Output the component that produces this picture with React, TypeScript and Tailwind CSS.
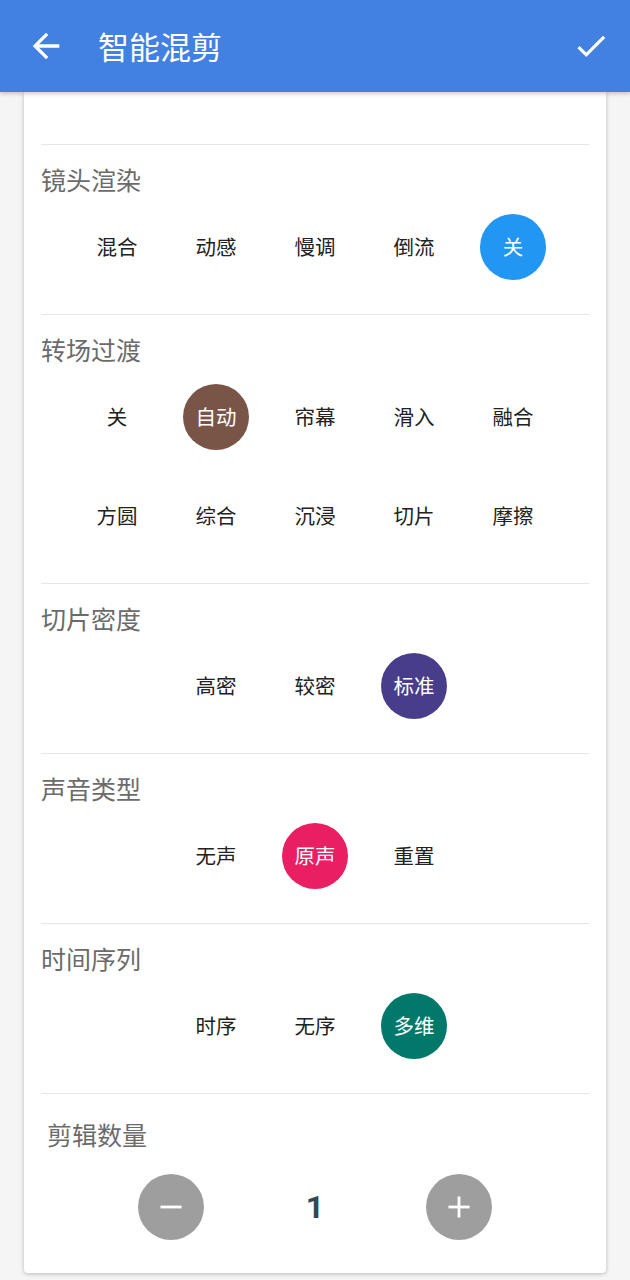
import React, { useState } from 'react';

type Section = {
  title: string;
  options: string[];
  offset: number;
  color: string;
};

const sections: Section[] = [
  { title: '镜头渲染', options: ['混合', '动感', '慢调', '倒流', '关'], offset: 0, color: 'bg-[#2196f3]' },
  {
    title: '转场过渡',
    options: ['关', '自动', '帘幕', '滑入', '融合', '方圆', '综合', '沉浸', '切片', '摩擦'],
    offset: 0,
    color: 'bg-[#795548]',
  },
  { title: '切片密度', options: ['高密', '较密', '标准'], offset: 1, color: 'bg-[#483d8b]' },
  { title: '声音类型', options: ['无声', '原声', '重置'], offset: 1, color: 'bg-[#e91e63]' },
  { title: '时间序列', options: ['时序', '无序', '多维'], offset: 1, color: 'bg-[#00796b]' },
];

const initial = [4, 1, 2, 1, 2];

function OptionSection({ section, selected, onSelect }: { section: Section; selected: number; onSelect: (i: number) => void }) {
  return (
    <div className="border-t border-[#e6e6e6]">
      <div className="pt-[22px] text-[25px] leading-[24px] text-[#6b6b6b]">{section.title}</div>
      <div className="mx-auto mt-[6px] grid w-[495px] grid-cols-5 pb-[18px]">
        {section.offset > 0 && <div />}
        {section.options.map((opt, i) => (
          <div key={opt + i} className="flex h-[99px] items-center justify-center">
            <button
              onClick={() => onSelect(i)}
              className={`flex h-[66px] w-[66px] items-center justify-center rounded-full text-[20.5px] ${
                i === selected ? `${section.color} text-white` : 'text-[#222]'
              }`}
            >
              {opt}
            </button>
          </div>
        ))}
      </div>
    </div>
  );
}

export default function App() {
  const [selected, setSelected] = useState(initial);
  const [count, setCount] = useState(1);

  return (
    <div
      className="flex h-[1280px] w-[630px] flex-col overflow-hidden bg-[#f5f5f5]"
      style={{ fontFamily: '"Noto Sans CJK SC", Roboto, sans-serif' }}
    >
      {/* Header */}
      <div className="z-10 flex h-[92px] shrink-0 items-center bg-[#4281e1] pl-[26px] pr-[20px] shadow-[0_2px_4px_rgba(0,0,0,0.2)]">
        <svg width="40" height="40" viewBox="0 0 24 24" fill="white">
          <path d="M20 11H7.83l5.59-5.59L12 4l-8 8 8 8 1.41-1.41L7.83 13H20v-2z" />
        </svg>
        <div className="ml-[32px] flex-1 text-[31px] text-white">智能混剪</div>
        <svg width="38" height="38" viewBox="0 0 24 24" fill="white">
          <path d="M9 16.17L4.83 12l-1.42 1.41L9 19 21 7l-1.41-1.41z" />
        </svg>
      </div>

      {/* Card */}
      <div className="mx-[24px] flex-1">
        <div className="rounded-b-[4px] bg-white px-[17px] shadow-[0_1px_4px_rgba(0,0,0,0.25)]">
          <div className="h-[52px]" />
          {sections.map((s, idx) => (
            <OptionSection
              key={s.title}
              section={s}
              selected={selected[idx]}
              onSelect={(i) => setSelected(selected.map((v, j) => (j === idx ? i : v)))}
            />
          ))}

          {/* Count */}
          <div className="border-t border-[#e6e6e6]">
            <div className="pl-[6px] pt-[28px] text-[25px] leading-[24px] text-[#6b6b6b]">剪辑数量</div>
            <div className="mx-auto mt-[28px] grid h-[66px] w-[432px] grid-cols-3 items-center">
              <div className="flex justify-center">
                <button
                  onClick={() => setCount(Math.max(1, count - 1))}
                  className="flex h-[66px] w-[66px] items-center justify-center rounded-full bg-[#9e9e9e]"
                >
                  <svg width="28" height="28" viewBox="0 0 24 24" fill="white">
                    <rect x="3" y="10.8" width="18" height="2.4" />
                  </svg>
                </button>
              </div>
              <div className="text-center text-[32px] font-bold text-[#37474f]" style={{ fontFamily: 'Roboto, sans-serif' }}>
                {count}
              </div>
              <div className="flex justify-center">
                <button
                  onClick={() => setCount(count + 1)}
                  className="flex h-[66px] w-[66px] items-center justify-center rounded-full bg-[#9e9e9e]"
                >
                  <svg width="28" height="28" viewBox="0 0 24 24" fill="white">
                    <rect x="3" y="10.8" width="18" height="2.4" />
                    <rect x="10.8" y="3" width="2.4" height="18" />
                  </svg>
                </button>
              </div>
            </div>
            <div className="h-[33px]" />
          </div>
        </div>
      </div>
    </div>
  );
}
